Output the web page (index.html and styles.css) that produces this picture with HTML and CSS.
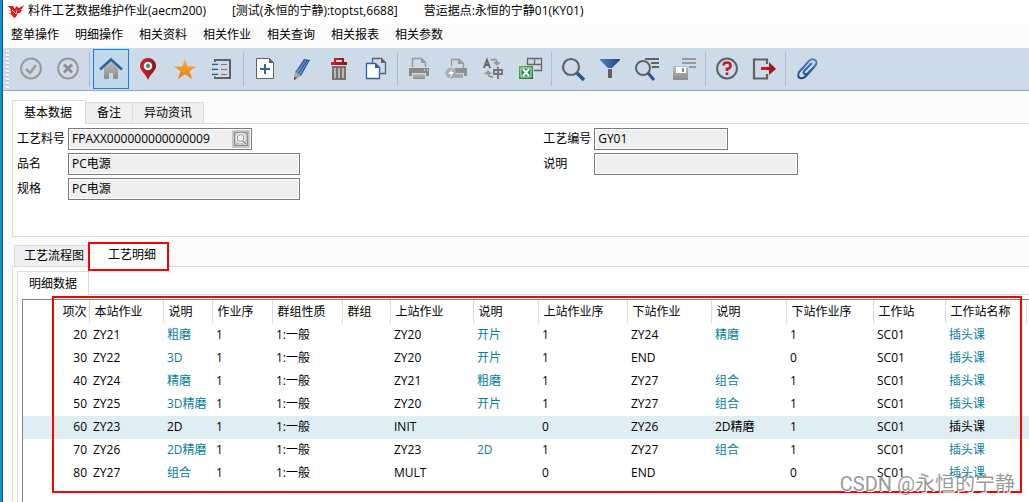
FILE: index.html
```html
<!DOCTYPE html>
<html lang="zh-CN">
<head>
<meta charset="utf-8">
<title>料件工艺数据维护作业(aecm200)</title>
<link rel="stylesheet" href="styles.css">
</head>
<body>
<svg class="defs" width="0" height="0" aria-hidden="true">
  <defs>
    <linearGradient id="gray" x1="0" y1="0" x2="0" y2="1"><stop offset="0" stop-color="#bdbdbd"/><stop offset="1" stop-color="#8c8c8c"/></linearGradient>
    <linearGradient id="blue" x1="0" y1="0" x2="1" y2="0"><stop offset="0" stop-color="#4a86bd"/><stop offset="1" stop-color="#1d4484"/></linearGradient>
    <linearGradient id="red" x1="0" y1="0" x2="1" y2="0"><stop offset="0" stop-color="#d2232a"/><stop offset="1" stop-color="#861519"/></linearGradient>
    <linearGradient id="gold" x1="0" y1="0" x2="0" y2="1"><stop offset="0" stop-color="#fbb040"/><stop offset="1" stop-color="#e97a10"/></linearGradient>
    <linearGradient id="green" x1="0" y1="0" x2="1" y2="1"><stop offset="0" stop-color="#5cae4a"/><stop offset="1" stop-color="#137a34"/></linearGradient>
    <linearGradient id="steel" x1="0" y1="0" x2="0" y2="1"><stop offset="0" stop-color="#4a86bd"/><stop offset="1" stop-color="#1d4484"/></linearGradient>
  </defs>
</svg>
<div class="window">
  <header class="titlebar">
    <svg class="logo" width="17" height="16" viewBox="0 0 17 16"><path fill="#e0191f" d="M0 3h6l2 3 1-3 3 2 5-3-2 4-2 1h2l-2 3h-2l-2 4-2 1-3-4-3-1h3L4 8 2 7h2L3 5z"/><path fill="none" stroke="#fff" stroke-width=".8" d="M5 7l4 4 1-4"/></svg>
    <h1 class="title">料件工艺数据维护作业(aecm200)</h1>
    <span>[测试(永恒的宁静):toptst,6688]</span>
    <span>营运据点:永恒的宁静01(KY01)</span>
  </header>
  <nav class="menubar">
    <button>整单操作</button><button>明细操作</button><button>相关资料</button><button>相关作业</button><button>相关查询</button><button>相关报表</button><button>相关参数</button>
  </nav>
  <div class="toolbar" role="toolbar">
    <span class="grip"></span>
    <button class="tool" aria-label="确定"><svg viewBox="0 0 26 26"><circle cx="13" cy="12.500" r="9.900" fill="none" stroke="#999" stroke-width="2"/><path d="M8 13l4 4 6-8" fill="none" stroke="#9c9c9c" stroke-width="2.500"/></svg></button>
    <button class="tool" aria-label="取消"><svg viewBox="0 0 26 26"><circle cx="13" cy="12.500" r="9.900" fill="none" stroke="#999" stroke-width="2"/><path d="M9 8.500l8 8M17 8.500l-8 8" stroke="#8c8c8c" stroke-width="2.700"/></svg></button>
    <span class="sep"></span>
    <button class="tool current" aria-label="首页"><svg viewBox="0 0 26 26"><path d="M6 12l7-7 7 7v11h-5v-6h-4v6H6z" fill="url(#gray)"/><path d="M2 13.500 13 3.500l11 10" fill="none" stroke="#2f62a0" stroke-width="2.600"/></svg></button>
    <button class="tool" aria-label="定位"><svg viewBox="0 0 26 26"><path d="M13 24C11 18 5 15 5 10a8 8 0 0 1 16 0c0 5-6 8-8 14z" fill="url(#red)"/><circle cx="13" cy="10" r="4.300" fill="#fff"/><circle cx="13" cy="10" r="2.200" fill="#777"/></svg></button>
    <button class="tool" aria-label="收藏"><svg viewBox="0 0 26 26"><path d="M13 3l2.700 7.500H24l-6.500 4.800L20 23l-7-4.700L6 23l2.500-7.700L2 10.500h8.300z" fill="url(#gold)"/></svg></button>
    <button class="tool" aria-label="笔记"><svg viewBox="0 0 26 26"><path d="M6 6V4h15v18H6v-2" fill="none" stroke="#626262" stroke-width="2"/><path d="M12 8.500h6M12 13.500h6M12 18.500h6" stroke="#777"/><path d="M3 8.500h6M3 13.500h6M3 18.500h6" stroke="#2c5a98" stroke-width="1.500"/><path d="M4 10h5M4 15h5M4 20h5" stroke="#f2f2f2"/></svg></button>
    <span class="sep"></span>
    <button class="tool" aria-label="新增"><svg viewBox="0 0 26 26"><path d="M4.500 2.500h13l4 4v16h-17z" fill="#fff" stroke="#626262"/><path d="M17 2v5h5z" fill="#626262"/><path d="M13 8v10M8 13h10" stroke="#2f62a0" stroke-width="2"/></svg></button>
    <button class="tool" aria-label="修改"><svg viewBox="0 0 26 26"><path d="M6 16 15 3l6 1-9 16z" fill="url(#blue)"/><path d="M8 17 17 4M10 19l9-14" stroke="#9abddc" stroke-width=".7"/><path d="M6 16l6 4-7 4z" fill="#a6a6a6"/><path d="M5 21l3 1-3 2z" fill="#444"/></svg></button>
    <button class="tool" aria-label="删除"><svg viewBox="0 0 26 26"><path d="M8 6V2h10v4M5 6h16v3H5z" fill="url(#red)"/><path d="M10 4h6v2h-6z" fill="#cddae7"/><path d="M6 10h14v14H6z" fill="#737373"/><path d="M9 12v10M13 12v10M17 12v10" stroke="#d5d5d5" stroke-width="2"/><path d="M9 12v10M13 12v10M17 12v10" stroke="#858585" stroke-width=".7"/></svg></button>
    <button class="tool" aria-label="复制"><svg viewBox="0 0 26 26"><path d="M9.500 7V2.500h9l4 4v11H17" fill="none" stroke="#626262" stroke-width="1.300"/><path d="M18 2v5h5z" fill="#626262"/><path d="M3.500 7.500h9l4 4v11h-13z" fill="#fff" stroke="#2f62a0" stroke-width="1.300"/><path d="M12 7v5h5z" fill="#2f62a0"/></svg></button>
    <span class="sep"></span>
    <button class="tool" aria-label="打印"><svg viewBox="0 0 26 26"><path d="M6.500 11V2.500h9l4 4V11" fill="none" stroke="#999" stroke-width="1.500"/><path d="M15 2v5h5z" fill="#999"/><path d="M3 12h20v8h-3v-3H6v3H3z" fill="#888"/><path d="M7 18h12v5H7z" fill="url(#gray)"/><path d="M18 14h1M21 14h1" stroke="#fff"/></svg></button>
    <button class="tool" aria-label="快速打印"><svg viewBox="0 0 26 26"><path d="M8.500 10V3.500h8l4 4V12" fill="none" stroke="#999" stroke-width="1.300"/><path d="M15 3v5h5z" fill="#999"/><path d="M12 12h12v8h-3v-3h-9z" fill="#909090"/><path d="M12 18h8v4h-8z" fill="#a5a5a5"/><circle cx="8" cy="17" r="5.500" fill="#aaa"/><path d="M10 12l-5 6h3l-2 5 5-7H8z" fill="#fff"/></svg></button>
    <button class="tool" aria-label="语言"><svg viewBox="0 0 26 26"><path d="M4 12l3-8 3 8M5 9h4" fill="none" stroke="#666" stroke-width="1.900"/><path d="M14 14h8v4h-8zM18 11v12" fill="none" stroke="#777" stroke-width="1.900"/><path d="M11 4q6-2 6 3" fill="none" stroke="#999" stroke-width="2"/><path d="M13 6h8l-4 4zM4 18h8l-4-4z" fill="#999"/><path d="M8 17q0 4 5 4" fill="none" stroke="#999" stroke-width="2"/></svg></button>
    <button class="tool" aria-label="导出Excel"><svg viewBox="0 0 26 26"><path d="M10.500 9V2.500h14v12H17M10 8.500h15M17.500 2v7" fill="none" stroke="#686868" stroke-width="1.300"/><path d="M2 10h14v13H2z" fill="url(#green)"/><path d="M4 12h10v9H4z" fill="#268640" stroke="#fff" stroke-width=".8"/><path d="M6 13l6 7M12 13l-6 7" stroke="#fff" stroke-width="2"/></svg></button>
    <span class="sep"></span>
    <button class="tool" aria-label="查询"><svg viewBox="0 0 26 26"><circle cx="11" cy="11" r="8" fill="none" stroke="#626262" stroke-width="2.200"/><path d="M17 17l7 7" stroke="#25559a" stroke-width="3.500"/></svg></button>
    <button class="tool" aria-label="筛选"><svg viewBox="0 0 26 26"><path d="M3 3h20v1l-8 8h-4L3 4z" fill="url(#blue)"/><path d="M11 13h4v9h-4z" fill="#626262"/></svg></button>
    <button class="tool" aria-label="高级查询"><svg viewBox="0 0 26 26"><circle cx="9" cy="12" r="7" fill="none" stroke="#626262" stroke-width="2"/><path d="M14 17l6 7" stroke="#25559a" stroke-width="3"/><path d="M11 3h14M17 7h8M18 11h7" stroke="#626262" stroke-width="2"/></svg></button>
    <button class="tool" aria-label="保存查询"><svg viewBox="0 0 26 26"><path d="M2 10h13l2 2v12H2z" fill="url(#gray)"/><path d="M5 11h10v6H5z" fill="#fff"/><path d="M11 12h2v4h-2z" fill="#888"/><path d="M11 3h14M11 7h14M18 11h7" stroke="#999" stroke-width="2"/></svg></button>
    <span class="sep"></span>
    <button class="tool" aria-label="帮助"><svg viewBox="0 0 26 26"><circle cx="13" cy="12.500" r="9.900" fill="none" stroke="#626262" stroke-width="2"/><path d="M9.500 9.500q0-3 3.500-3t3.500 3-3.500 3.500v2" fill="none" stroke="#b91f26" stroke-width="2.600"/><path d="M11.700 16.500h2.600v2.500h-2.600z" fill="#b91f26"/></svg></button>
    <button class="tool" aria-label="退出"><svg viewBox="0 0 26 26"><path d="M16 8V3.500H3v19h13V18" fill="none" stroke="#626262" stroke-width="2.200"/><path d="M10 11h8V6l7 7-7 6v-5h-8z" fill="url(#red)"/></svg></button>
    <span class="sep"></span>
    <button class="tool" aria-label="附件"><svg viewBox="0 0 26 26"><path d="M21 10l-9 10q-3 3-6 2t-1-6L15 5q3-3 6-1t0 6M19 12l-6 6q-2 1-3-.500t1-3.500l7-7" fill="none" stroke="url(#steel)" stroke-width="2"/></svg></button>
  </div>

  <main class="content">
    <section>
      <div class="tabs basic" role="tablist">
        <button class="tab active" role="tab" aria-selected="true">基本数据</button><button class="tab" role="tab">备注</button><button class="tab" role="tab">异动资讯</button>
      </div>
      <div class="panel form">
        <div class="fields">
          <label for="item">工艺料号</label>
          <div class="lookup"><input id="item" class="input" value="FPAXX000000000000009" readonly><button class="find" aria-label="查找"><svg viewBox="0 0 14 14"><path d="M.5.5h13v13H.5z" fill="none" stroke="#8d8d8d"/><circle cx="6.500" cy="6" r="3.500" fill="none" stroke="#fff" stroke-width="3"/><circle cx="6.500" cy="6" r="3.500" fill="#eee" stroke="#909090"/><path d="M9 9l3 3" stroke="#fff" stroke-width="3"/><path d="M9 9l3 3" stroke="#777" stroke-width="1.300"/></svg></button></div>
          <label for="name">品名</label><input id="name" class="input wide" value="PC电源" readonly>
          <label for="spec">规格</label><input id="spec" class="input wide" value="PC电源" readonly>
        </div>
        <div class="fields">
          <label for="code">工艺编号</label><input id="code" class="input small" value="GY01" readonly>
          <label for="desc">说明</label><input id="desc" class="input medium" value="" readonly>
        </div>
      </div>
    </section>

    <section class="details">
      <div class="tabs inset" role="tablist">
        <button class="tab" role="tab">工艺流程图</button><button class="tab active marked" role="tab" aria-selected="true">工艺明细</button>
      </div>
      <div class="panel outer">
        <div class="tabs" role="tablist"><button class="tab active" role="tab" aria-selected="true">明细数据</button></div>
        <div class="panel inner">
          <div class="grid">
            <table>
              <colgroup><col class="w66"><col class="w74"><col class="w49"><col class="w60"><col class="w70"><col class="w48"><col class="w83"><col class="w65"><col class="w89"><col class="w84"><col class="w75"><col class="w87"><col class="w72"><col class="w81"><col></colgroup>
              <thead><tr><th>项次</th><th>本站作业</th><th>说明</th><th>作业序</th><th>群组性质</th><th>群组</th><th>上站作业</th><th>说明</th><th>上站作业序</th><th>下站作业</th><th>说明</th><th>下站作业序</th><th>工作站</th><th>工作站名称</th><th></th></tr></thead>
              <tbody>
                <tr><td>20</td><td>ZY21</td><td class="ref">粗磨</td><td>1</td><td>1:一般</td><td></td><td>ZY20</td><td class="ref">开片</td><td>1</td><td>ZY24</td><td class="ref">精磨</td><td>1</td><td>SC01</td><td class="ref">插头课</td><td></td></tr>
                <tr><td>30</td><td>ZY22</td><td class="ref">3D</td><td>1</td><td>1:一般</td><td></td><td>ZY20</td><td class="ref">开片</td><td>1</td><td>END</td><td class="ref"></td><td>0</td><td>SC01</td><td class="ref">插头课</td><td></td></tr>
                <tr><td>40</td><td>ZY24</td><td class="ref">精磨</td><td>1</td><td>1:一般</td><td></td><td>ZY21</td><td class="ref">粗磨</td><td>1</td><td>ZY27</td><td class="ref">组合</td><td>1</td><td>SC01</td><td class="ref">插头课</td><td></td></tr>
                <tr><td>50</td><td>ZY25</td><td class="ref">3D精磨</td><td>1</td><td>1:一般</td><td></td><td>ZY20</td><td class="ref">开片</td><td>1</td><td>ZY27</td><td class="ref">组合</td><td>1</td><td>SC01</td><td class="ref">插头课</td><td></td></tr>
                <tr class="selected"><td>60</td><td>ZY23</td><td class="ref">2D</td><td>1</td><td>1:一般</td><td></td><td>INIT</td><td class="ref"></td><td>0</td><td>ZY26</td><td class="ref">2D精磨</td><td>1</td><td>SC01</td><td class="ref">插头课</td><td></td></tr>
                <tr><td>70</td><td>ZY26</td><td class="ref">2D精磨</td><td>1</td><td>1:一般</td><td></td><td>ZY23</td><td class="ref">2D</td><td>1</td><td>ZY27</td><td class="ref">组合</td><td>1</td><td>SC01</td><td class="ref">插头课</td><td></td></tr>
                <tr><td>80</td><td>ZY27</td><td class="ref">组合</td><td>1</td><td>1:一般</td><td></td><td>MULT</td><td class="ref"></td><td>0</td><td>END</td><td class="ref"></td><td>0</td><td>SC01</td><td class="ref">插头课</td><td></td></tr>
              </tbody>
            </table>
            <div class="mark"></div>
          </div>
        </div>
      </div>
    </section>
  </main>
  <div class="watermark">CSDN @永恒的宁静</div>
</div>
</body>
</html>
```

FILE: styles.css
```css
* { box-sizing: border-box; }

body {
  margin: 0;
  background: #fff;
  color: #000;
  font: 12px/16px "Open Sans", "Noto Sans CJK SC", sans-serif;
}

button, input { font: inherit; color: inherit; border-radius: 0; }
button { border: 0; background: none; padding: 0; white-space: nowrap; }

.defs { position: absolute; }

.window {
  position: relative;
  display: flex;
  flex-direction: column;
  min-height: 100vh;
  overflow: hidden;
  border-left: 2px solid #0a94d8;
  box-shadow: inset 1px 0 #3a4a56;
  padding-left: 1px;
}

.titlebar {
  display: flex;
  align-items: center;
  gap: 26px;
  height: 24px;
  padding-left: 4px;
  padding-bottom: 2px;
  white-space: nowrap;
}
.logo { flex: none; margin-right: -22px; }
.title { margin: 0; font-size: 12px; font-weight: 400; }

.menubar {
  display: flex;
  gap: 16px;
  height: 24px;
  padding: 0 8px 3px;
  background: #fcfcfc;
}

.toolbar {
  display: flex;
  align-items: center;
  gap: 1px;
  height: 43px;
  padding: 0 2px;
  background: #cddae7;
  border-bottom: 1px solid #98a6b3;
}
.grip {
  width: 3px;
  height: 38px;
  margin: 0 3px 0 1px;
  background: repeating-linear-gradient(#f4f7fa 0 2px, #b9c6d3 2px 3px, transparent 3px 4px);
}
.tool {
  display: flex;
  align-items: center;
  justify-content: center;
  flex: none;
  width: 36px;
  height: 40px;
}
.tool svg { width: 26px; height: 26px; }
.current { background: #c1d8e8; border: 1px solid #0b84ea; }
.sep { flex: none; width: 1px; height: 34px; margin: 0 2px; background: #aebccb; }

.content {
  flex: 1;
  display: flex;
  flex-direction: column;
  gap: 5px;
  padding: 9px 0 0 9px;
  background: #fcfcfc;
}

.tabs { display: flex; align-items: flex-end; }
.tab {
  height: 21px;
  padding: 0 11px;
  background: #efefef;
  border: 1px solid #dcdcdc;
  border-width: 1px 1px 0 0;
}
.tab.active {
  position: relative;
  z-index: 1;
  height: 24px;
  margin-bottom: -1px;
  background: #fff;
  border-left-width: 1px;
}
.basic .active { padding-right: 13px; }
.panel { background: #fff; border: 1px solid #dcdcdc; border-right: 0; }

.form {
  display: grid;
  grid-template-columns: 52% 1fr;
  column-gap: 2px;
  align-items: start;
  min-height: 114px;
  padding: 4px;
}
.fields {
  display: grid;
  grid-template-columns: 51px 1fr;
  grid-auto-rows: 22px;
  row-gap: 3px;
  align-items: center;
  justify-items: start;
}
.input, .lookup {
  height: 22px;
  background: #efefef;
  border: 1px solid #7a7a7a;
  box-shadow: inset 0 0 0 1px #fff;
}
.input { padding: 0 3px 2px; outline: 0; }
.lookup { display: flex; width: 184px; padding: 1px; }
.lookup .input {
  flex: 1;
  min-width: 0;
  height: 18px;
  padding: 0 2px 1px;
  border: 0;
  box-shadow: none;
}
.find {
  display: flex;
  align-items: center;
  justify-content: center;
  width: 18px;
  height: 18px;
  background: #c6c6c6;
}
.find svg { width: 14px; height: 14px; }
.wide { width: 232px; }
.small { width: 134px; }
.medium { width: 204px; }

.details { flex: 1; display: flex; flex-direction: column; }
.inset { padding-left: 2px; }
.inset .tab { padding: 0 9px; border-left-width: 1px; }
.inset .marked {
  margin-left: -6px;
  margin-bottom: -5px;
  height: 29px;
  padding: 0 11px 4px 18px;
  border: 2px solid #f00;
}
.outer { flex: 1; display: flex; flex-direction: column; padding: 4px 0 0 4px; border-bottom: 0; }
.inner { flex: 1; display: flex; padding: 4px 0 0 4px; border-bottom: 0; }
.grid {
  position: relative;
  flex: 1;
  min-width: 0;
  border: 1px solid #7b8288;
  border-width: 1px 0 0 1px;
}

table { width: 100%; table-layout: fixed; border-collapse: collapse; }
th, td { height: 23px; padding: 0 0 1px 4px; text-align: left; font-weight: 400; white-space: nowrap; }
th { height: 24px; padding: 0 0 1px 5px; border-right: 1px solid #dedede; }
th:last-child { border-right: 0; }
th:first-child, td:first-child { padding: 0 2px 1px 0; text-align: right; }
.ref { color: #078199; }
.selected { background: #dfeef3; }
.selected .ref { color: #000; }

.w66 { width: 66px; }
.w74 { width: 74px; }
.w49 { width: 49px; }
.w60 { width: 60px; }
.w70 { width: 70px; }
.w48 { width: 48px; }
.w83 { width: 83px; }
.w65 { width: 65px; }
.w89 { width: 89px; }
.w84 { width: 84px; }
.w75 { width: 75px; }
.w87 { width: 87px; }
.w72 { width: 72px; }
.w81 { width: 81px; }

.mark {
  position: absolute;
  top: -4px;
  left: 29px;
  right: 7px;
  height: 197px;
  border: 2px solid #f00;
  pointer-events: none;
}

.watermark {
  position: absolute;
  right: 14px;
  bottom: 5px;
  color: rgba(120, 120, 120, .75);
  text-shadow: 1px 1px #fff;
  font: 20px/26px Roboto, "Noto Sans CJK SC", sans-serif;
}
```
